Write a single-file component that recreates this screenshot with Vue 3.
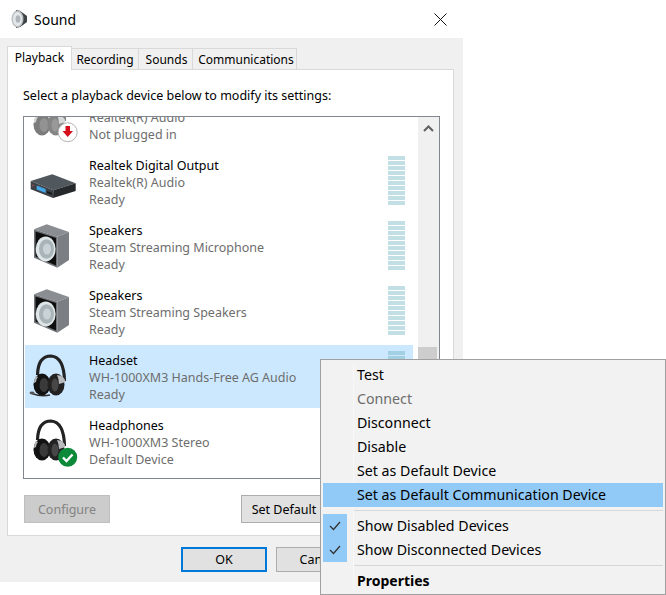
<script setup>
const tabs = ['Playback', 'Recording', 'Sounds', 'Communications']

const devices = [
  { id: 1, icon: 'plug', name: '', sub: 'Realtek(R) Audio', status: 'Not plugged in' },
  { id: 2, icon: 'receiver', name: 'Realtek Digital Output', sub: 'Realtek(R) Audio', status: 'Ready', meter: true },
  { id: 3, icon: 'speaker', name: 'Speakers', sub: 'Steam Streaming Microphone', status: 'Ready', meter: true },
  { id: 4, icon: 'speaker', name: 'Speakers', sub: 'Steam Streaming Speakers', status: 'Ready', meter: true },
  { id: 5, icon: 'headset', name: 'Headset', sub: 'WH-1000XM3 Hands-Free AG Audio', status: 'Ready', meter: true, selected: true },
  { id: 6, icon: 'default', name: 'Headphones', sub: 'WH-1000XM3 Stereo', status: 'Default Device' }
]

const menuTop = ['Test', 'Connect', 'Disconnect', 'Disable', 'Set as Default Device', 'Set as Default Communication Device']
</script>

<template>
  <div class="screen">
    <div class="dialog">
      <div class="titlebar">
        <svg class="title-icon" width="17" height="18" viewBox="0 0 17 18">
          <path d="M5 0 Q9 0 12 3 L16 6 V12 L12 15 Q9 18 5 18Z" fill="#3f4447" />
          <ellipse cx="6.5" cy="9" rx="6" ry="8.5" fill="#b9bec1" />
          <ellipse cx="6.5" cy="9" rx="4.6" ry="7" fill="#e3e7ea" />
          <ellipse cx="7" cy="9" rx="2.4" ry="3.8" fill="#aeb5ba" />
        </svg>
        <span class="title-text">Sound</span>
        <svg class="close-icon" width="13" height="13" viewBox="0 0 13 13">
          <path d="M.5.5 12.5 12.5M12.5.5.5 12.5" stroke="#111" stroke-width="1" fill="none" />
        </svg>
      </div>

      <div class="body">
        <div class="tabs">
          <div v-for="(tab, i) in tabs" :key="tab" class="tab" :class="{ active: i === 0 }">{{ tab }}</div>
        </div>

        <div class="panel">
          <p class="hint">Select a playback device below to modify its settings:</p>

          <div class="list">
            <div class="rows">
              <div v-for="d in devices" :key="d.id" class="row" :class="{ selected: d.selected }">
                <div class="device-icon">
                  <svg v-if="d.icon === 'receiver'" width="48" height="48" viewBox="0 0 48 48">
                    <path d="M4.7 23 26.3 16.3 49.7 25.3 27.3 32.3Z" fill="#50585d" />
                    <path d="M4.7 23 27.3 32.3 27 40 4.7 31.3Z" fill="#3b4146" />
                    <path d="M27.3 32.3 49.7 25.3 49.7 33 27 40Z" fill="#25292c" />
                    <path d="M10.7 27.5 19.7 31 19.7 35 10.7 31.5Z" fill="#45a6e8" />
                    <circle cx="7" cy="27.5" r="1" fill="#9a4a55" />
                    <path d="M21 33 26 35 26 37 21 35Z" fill="#15181a" />
                  </svg>
                  <svg v-else-if="d.icon === 'speaker'" width="48" height="48" viewBox="0 0 48 48">
                    <path d="M8 6.3 20.7 1.3 43 9 31.3 13.7Z" fill="#8a8e92" />
                    <path d="M31.3 13.7 43 9 43 37 31.3 44.7Z" fill="#7b7f83" />
                    <path d="M8 6.3 31.3 13.7 31.3 44.7 8 34.7Z" fill="#6f7377" />
                    <path d="M9.5 8.5 30 15 30 42.5 9.5 33.5Z" fill="#0e0e0e" />
                    <ellipse cx="19.7" cy="26" rx="10" ry="12.5" fill="#dfe6e8" />
                    <ellipse cx="20.5" cy="26" rx="7.5" ry="9.8" fill="#a9b4b8" />
                    <ellipse cx="21" cy="26" rx="4" ry="5.5" fill="#c9d3d7" />
                  </svg>
                  <svg v-else width="48" height="48" viewBox="0 0 48 48" :class="{ muted: d.icon === 'plug' }">
                    <g class="phones">
                      <path d="M11.5 22 Q12 3 25 3 Q38 4 38.5 28" fill="none" stroke="#232323" stroke-width="3.2" />
                      <path v-if="d.icon === 'headset'" d="M6 40.5 Q15 44 24 42" fill="none" stroke="#2f2f2f" stroke-width="1.4" />
                      <ellipse v-if="d.icon === 'headset'" cx="6" cy="40" rx="2.5" ry="1.4" fill="#555" />
                      <ellipse cx="16" cy="31.5" rx="8.5" ry="11" fill="#121212" />
                      <path d="M10 23 Q7.5 26 8 30 L10 29 Q10 26 12 24Z" fill="#b4b6b8" />
                      <ellipse cx="18" cy="32" rx="4.5" ry="7" fill="#3a3a3a" />
                      <ellipse cx="30" cy="31.5" rx="8.5" ry="11" fill="#222" />
                      <path d="M31 22 Q39 23 39.5 29 L33 31 Q33 26 31 22Z" fill="#b9bbbd" />
                      <ellipse cx="29" cy="32" rx="3.5" ry="6.5" fill="#474747" />
                    </g>
                    <template v-if="d.icon === 'default'">
                      <circle cx="41.7" cy="39.2" r="9.5" fill="#0c8a3a" />
                      <path d="M37 39.5 40.5 43 46.5 36.5" fill="none" stroke="#fff" stroke-width="2.4" />
                    </template>
                    <template v-if="d.icon === 'plug'">
                      <circle cx="41.7" cy="39.2" r="9.5" fill="#fff" stroke="#b4b4b4" />
                      <path d="M39.5 33 H44 V38 H47 L41.7 44 L36.5 38 H39.5Z" fill="#d60f1c" />
                    </template>
                  </svg>
                </div>
                <div class="device-text">
                  <div class="device-name">{{ d.name }}</div>
                  <div class="device-sub">{{ d.sub }}</div>
                  <div class="device-sub">{{ d.status }}</div>
                </div>
                <div v-if="d.meter" class="meter">
                  <span v-for="n in 10" :key="n"></span>
                </div>
              </div>
            </div>
            <div class="scrollbar">
              <svg class="arrow" width="11" height="7" viewBox="0 0 11 7">
                <path d="M1 6 5.5 1.5 10 6" fill="none" stroke="#606060" stroke-width="2" />
              </svg>
              <div class="thumb"></div>
            </div>
          </div>

          <div class="panel-buttons">
            <button class="btn disabled">Configure</button>
            <button class="btn set-default">Set Default</button>
          </div>
        </div>

        <div class="dialog-buttons">
          <button class="btn ok">OK</button>
          <button class="btn">Cancel</button>
        </div>
      </div>
    </div>

    <div class="menu">
      <div class="menu-gutter"></div>
      <div
        v-for="item in menuTop"
        :key="item"
        class="menu-item"
        :class="{ off: item === 'Connect', hot: item === 'Set as Default Communication Device' }"
      >{{ item }}</div>
      <div class="menu-sep"></div>
      <div class="menu-checks">
        <div class="menu-item checked">
          <svg width="12" height="10" viewBox="0 0 12 10"><path d="M1 5 4.5 8.5 11 1" fill="none" stroke="#333" stroke-width="1.3" /></svg>
          Show Disabled Devices
        </div>
        <div class="menu-item checked">
          <svg width="12" height="10" viewBox="0 0 12 10"><path d="M1 5 4.5 8.5 11 1" fill="none" stroke="#333" stroke-width="1.3" /></svg>
          Show Disconnected Devices
        </div>
      </div>
      <div class="menu-sep"></div>
      <div class="menu-item bold">Properties</div>
    </div>
  </div>
</template>

<style>
html, body {
  margin: 0;
  background: #fff;
}
</style>

<style scoped>
.screen {
  position: relative;
  width: 666px;
  height: 595px;
  overflow: hidden;
  background: #fff;
  font-family: "Noto Sans", "Open Sans", sans-serif;
  font-size: 12.5px;
  color: #000;
}

.dialog {
  width: 463px;
}

.titlebar {
  height: 38px;
  display: flex;
  align-items: center;
  padding: 0 16px 0 11px;
  gap: 6px;
}

.title-text {
  font-size: 14px;
  flex: 1;
}

.body {
  height: 544px;
  background: #f0f0f0;
  padding: 8px 9px 0 7px;
  box-sizing: border-box;
}

.tabs {
  display: flex;
  align-items: flex-end;
  height: 23px;
}

.tab {
  height: 21px;
  line-height: 21px;
  box-sizing: border-box;
  border: 1px solid #d9d9d9;
  border-bottom: none;
  margin-left: -1px;
  text-align: center;
  font-size: 12px;
}

.tab:nth-child(1) { width: 65px; margin-left: 0; }
.tab:nth-child(2) { width: 68px; }
.tab:nth-child(3) { width: 55px; padding-left: 2px; }
.tab:nth-child(4) { width: 105px; padding-left: 3px; }

.tab.active {
  height: 24px;
  margin-bottom: -1px;
  background: #fff;
  position: relative;
  z-index: 1;
}

.panel {
  height: 467px;
  box-sizing: border-box;
  background: #fff;
  border: 1px solid #d9d9d9;
  padding: 17px 13px 0 15px;
}

.hint {
  margin: 0 0 11px;
  line-height: 18px;
  white-space: nowrap;
}

.list {
  display: flex;
  height: 363px;
  box-sizing: border-box;
  border: 1px solid #82878f;
  overflow: hidden;
}

.rows {
  flex: 1;
  margin-top: -34px;
  padding: 2px 5px 0 1px;
}

.row {
  height: 63px;
  margin-bottom: 2px;
  display: flex;
  align-items: center;
  position: relative;
}

.row.selected {
  background: #cce8ff;
}

.device-icon {
  width: 48px;
  height: 48px;
  margin: 0 15px 0 1px;
}

.device-icon svg {
  display: block;
  overflow: visible;
}

.muted .phones {
  opacity: 0.55;
}

.device-text {
  padding-top: 1px;
  line-height: 17px;
  white-space: nowrap;
}

.device-name {
  min-height: 17px;
}

.device-sub {
  color: #6d6d6d;
}

.meter {
  position: absolute;
  right: 8px;
  top: 6px;
  width: 17px;
  display: flex;
  flex-direction: column;
  gap: 1px;
}

.meter span {
  height: 4px;
  background: #c2dfe6;
}

.selected .meter span {
  background: #a3cfe2;
}

.scrollbar {
  width: 21px;
  background: #f0f0f0;
  position: relative;
}

.arrow {
  display: block;
  margin: 8px auto 0;
}

.thumb {
  position: absolute;
  top: 230px;
  left: 0;
  width: 19px;
  height: 70px;
  background: #cdcdcd;
}

.panel-buttons {
  display: flex;
  justify-content: space-between;
  margin: 16px 0 0 1px;
}

.btn {
  height: 28px;
  width: 86px;
  padding: 0;
  background: #e1e1e1;
  border: 1px solid #adadad;
  font: inherit;
  color: #000;
}

.btn.disabled {
  background: #cccccc;
  border-color: #bfbfbf;
  color: #838383;
}

.btn.set-default {
  margin-right: 113px;
}

.dialog-buttons {
  display: flex;
  gap: 9px;
  margin: 11px 0 0 174px;
}

.dialog-buttons .btn {
  width: 86px;
  height: 25px;
}

.btn.ok {
  border: 2px solid #0078d7;
}

.menu {
  position: absolute;
  left: 320px;
  top: 359px;
  width: 346px;
  height: 236px;
  box-sizing: border-box;
  border: 1px solid #a0a0a0;
  background: #f2f2f2;
  padding: 3px 2px;
  font-size: 14.2px;
}

.menu-gutter {
  position: absolute;
  left: 32px;
  top: 3px;
  bottom: 3px;
  width: 1px;
  background: #f7f7f7;
}

.menu-item {
  height: 24px;
  line-height: 24px;
  padding-left: 34px;
  position: relative;
  white-space: nowrap;
}

.menu-item.off {
  color: #6d6d6d;
}

.menu-item.hot {
  background: #91c9f7;
}

.menu-item.bold {
  font-weight: 700;
  font-size: 14px;
}

.menu-sep {
  height: 1px;
  margin: 3px 0 3px 31px;
  background: #d7d7d7;
}

.menu-checks {
  position: relative;
}

.menu-checks::before {
  content: "";
  position: absolute;
  left: 0;
  top: 0;
  width: 24px;
  height: 48px;
  background: #91c9f7;
}

.checked svg {
  position: absolute;
  left: 6px;
  top: 7px;
}
</style>
